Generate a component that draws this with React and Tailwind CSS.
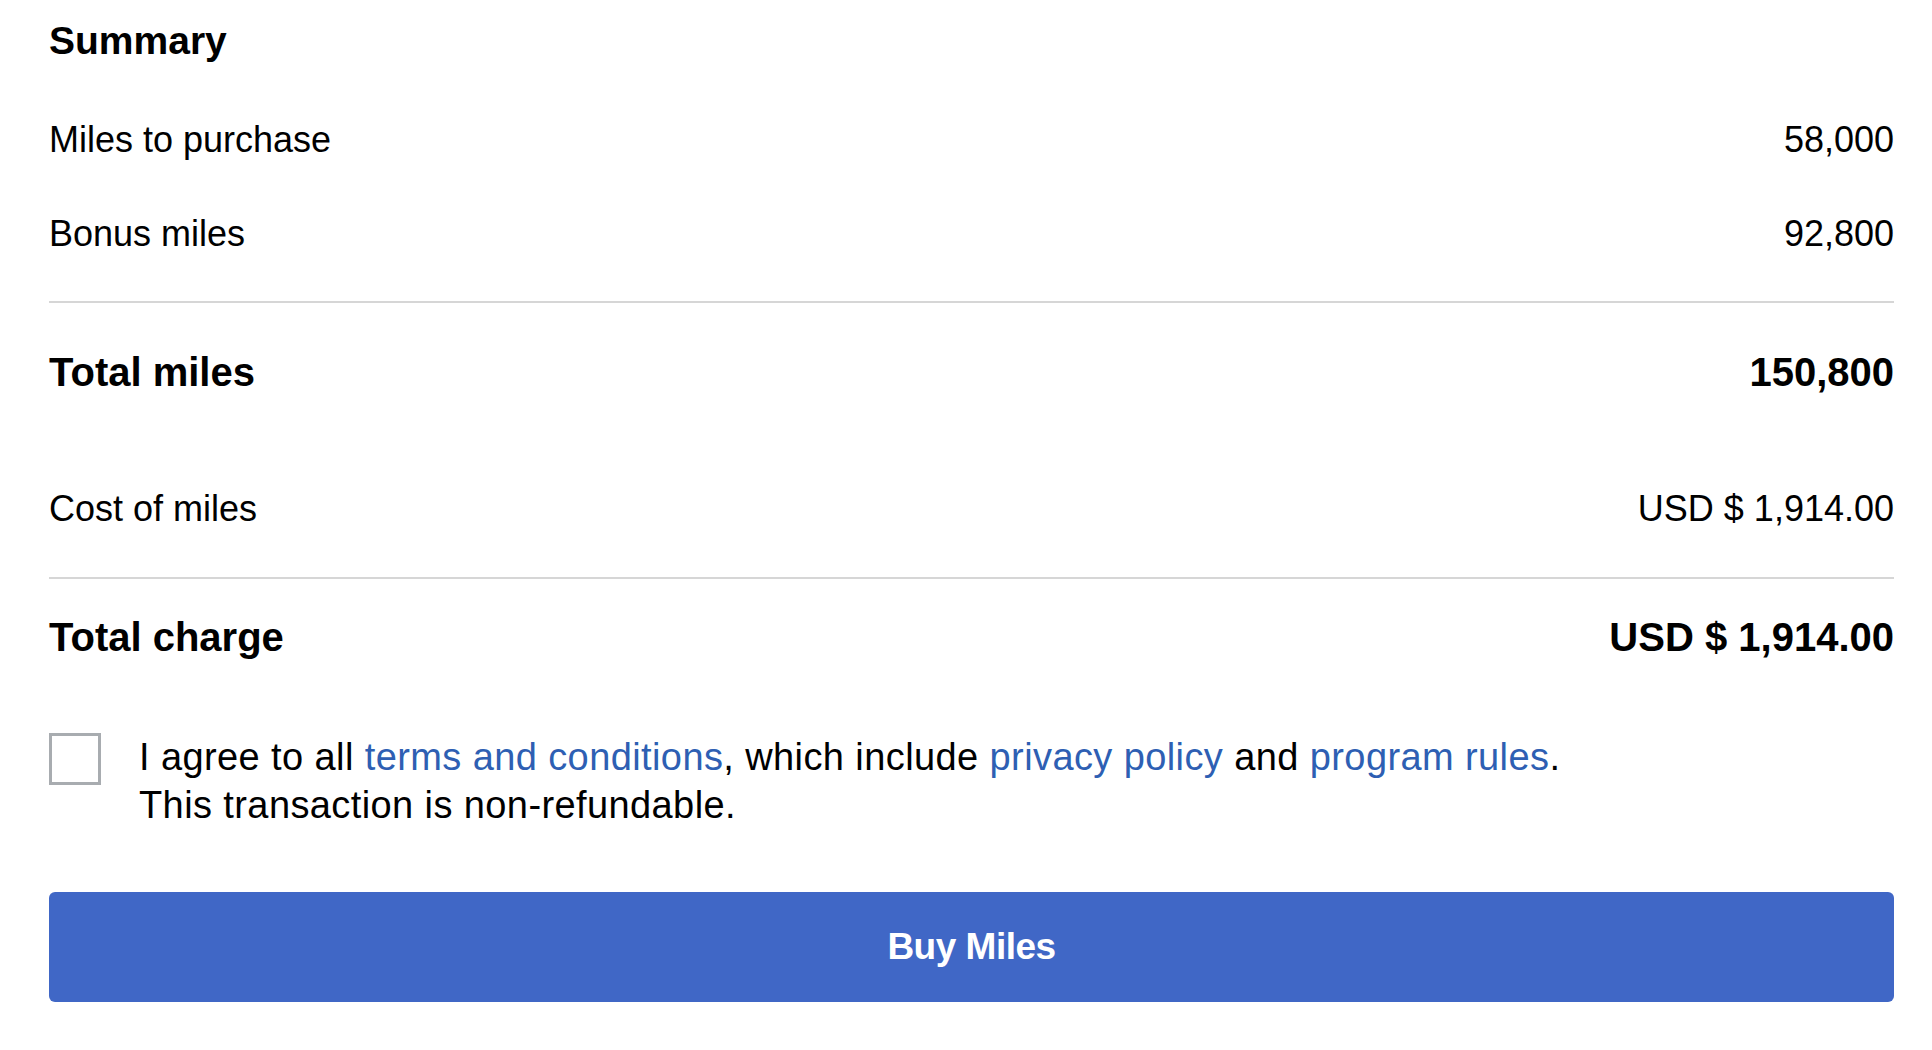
const Row = ({ label, value, bold, height }) => (
  <div className={`flex items-center justify-between ${height} ${bold ? 'text-[40px] font-bold' : 'text-[36px]'}`}>
    <span>{label}</span>
    <span>{value}</span>
  </div>
);

const App = () => {
  return (
    <div className="min-h-screen bg-white text-black font-['Liberation_Sans',Arial,sans-serif]">
      <div className="pl-[49px] pr-[38px]">
        <h2 className="h-[82px] flex items-center text-[39px] font-bold">Summary</h2>

        <Row label="Miles to purchase" value="58,000" height="h-[116px]" />
        <Row label="Bonus miles" value="92,800" height="h-[72px]" />

        <div className="mt-[31px] h-[2px] bg-[#d6d6d6]" />

        <Row label="Total miles" value="150,800" bold height="h-[138px]" />
        <Row label="Cost of miles" value="USD $ 1,914.00" height="h-[136px]" />

        <div className="h-[2px] bg-[#d6d6d6]" />

        <Row label="Total charge" value="USD $ 1,914.00" bold height="h-[116px]" />

        <div className="mt-[36px] flex items-start gap-[38px]">
          <label className="mt-[2px] w-[52px] h-[52px] shrink-0 border-[3px] border-[#a8acb0] bg-white cursor-pointer">
            <input type="checkbox" className="sr-only" />
          </label>
          <p className="mt-[2px] text-[38px] leading-[48px] tracking-[0.4px] text-black">
            I agree to all <a href="#" className="text-[#2e5fb3]">terms and conditions</a>, which include{' '}
            <a href="#" className="text-[#2e5fb3]">privacy policy</a> and{' '}
            <a href="#" className="text-[#2e5fb3]">program rules</a>.
            <br />
            This transaction is non-refundable.
          </p>
        </div>

        <button
          type="button"
          className="mt-[63px] w-full h-[110px] rounded-[6px] bg-[#4067c6] text-white text-[37px] font-bold tracking-[-0.5px]"
        >
          Buy Miles
        </button>
      </div>
    </div>
  );
};

export default App;
